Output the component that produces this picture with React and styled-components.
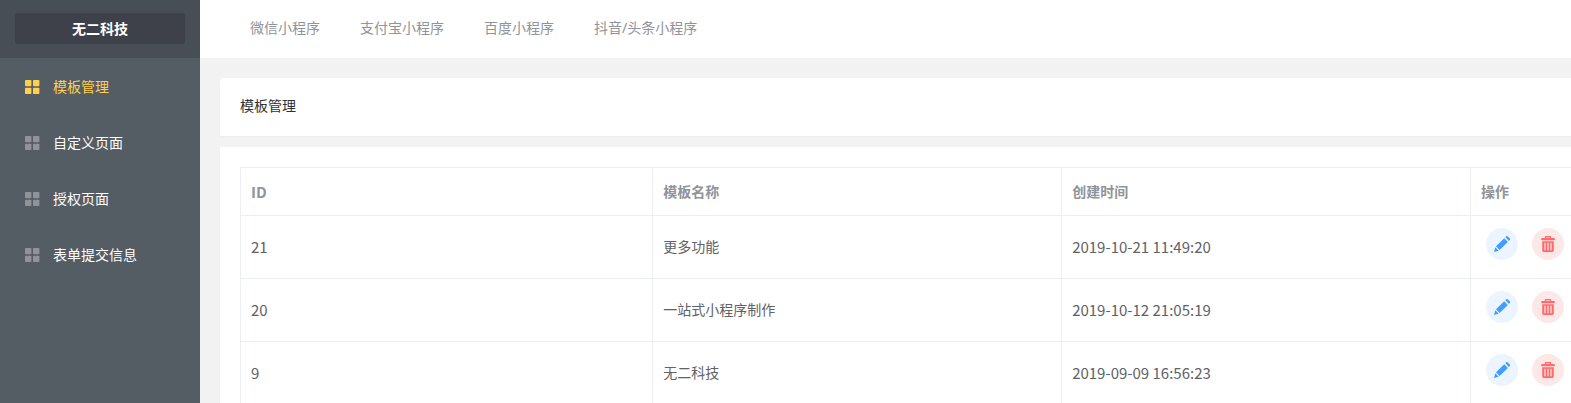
import React from 'react';
import styled, { createGlobalStyle } from 'styled-components';

const menus = ['模板管理', '自定义页面', '授权页面', '表单提交信息'];

const platforms = ['微信小程序', '支付宝小程序', '百度小程序', '抖音/头条小程序'];

const templates = [
    { id: 21, name: '更多功能', createdAt: '2019-10-21 11:49:20' },
    { id: 20, name: '一站式小程序制作', createdAt: '2019-10-12 21:05:19' },
    { id: 9, name: '无二科技', createdAt: '2019-09-09 16:56:23' }
];

function GridIcon() {
    return (
        <svg width="15" height="14" viewBox="0 0 15 14" fill="currentColor" aria-hidden="true">
            <rect x="0" y="0" width="6.4" height="6.2" rx="0.8" />
            <rect x="8" y="0" width="6.4" height="6.2" rx="0.8" />
            <rect x="0" y="7.8" width="6.4" height="6.2" rx="0.8" />
            <rect x="8" y="7.8" width="6.4" height="6.2" rx="0.8" />
        </svg>
    );
}

function PencilIcon() {
    return (
        <svg width="16" height="16" viewBox="0 0 16 16" fill="currentColor" aria-hidden="true">
            <path d="M11.3 1.1l.7-.7a1.3 1.3 0 0 1 1.8 0l1.9 1.9a1.3 1.3 0 0 1 0 1.8l-.8.8z" />
            <path d="M10.2 2.2l3.7 3.7-8.3 8.1-3.6-3.7z" />
            <path d="M1.3 11.3l3.4 3.4-4.7 1.3z" />
        </svg>
    );
}

function TrashIcon() {
    return (
        <svg width="16" height="16" viewBox="0 0 16 16" fill="currentColor" fillRule="evenodd" aria-hidden="true">
            <path d="M4.8 2V1.2C4.8.5 5.3 0 6 0h4c.7 0 1.2.5 1.2 1.2V2h2.9c.4 0 .7.3.7.7v1.1c0 .3-.3.5-.6.5H1.8c-.3 0-.6-.2-.6-.5V2.7c0-.4.3-.7.7-.7zm1.4 0h3.6v-.8H6.2z" />
            <path d="M2.2 5.3h11.6v9.2c0 .8-.6 1.4-1.4 1.4H3.6c-.8 0-1.4-.6-1.4-1.4zm2.2 1.5v7.4h1.2V6.8zm3 0v7.4h1.2V6.8zm3 0v7.4h1.2V6.8z" />
        </svg>
    );
}

export default function App() {
    return (
        <Layout>
            <GlobalStyle />
            <Sidebar>
                <Brand>
                    <BrandName>无二科技</BrandName>
                </Brand>
                <Menu>
                    {menus.map((menu, index) => (
                        <MenuItem key={menu} href="#" $active={index === 0}>
                            <GridIcon />
                            <span>{menu}</span>
                        </MenuItem>
                    ))}
                </Menu>
            </Sidebar>
            <Main>
                <TopNav>
                    {platforms.map(platform => (
                        <a key={platform} href="#">{platform}</a>
                    ))}
                </TopNav>
                <Content>
                    <TitleCard>
                        <h1>模板管理</h1>
                    </TitleCard>
                    <TableCard>
                        <Table>
                            <thead>
                                <tr>
                                    <th className="id latin">ID</th>
                                    <th>模板名称</th>
                                    <th>创建时间</th>
                                    <th className="actions">操作</th>
                                </tr>
                            </thead>
                            <tbody>
                                {templates.map(template => (
                                    <tr key={template.id}>
                                        <td className="latin">{template.id}</td>
                                        <td>{template.name}</td>
                                        <td className="latin">{template.createdAt}</td>
                                        <td>
                                            <Actions>
                                                <RoundButton type="button" aria-label="编辑">
                                                    <PencilIcon />
                                                </RoundButton>
                                                <RoundButton type="button" aria-label="删除" $danger>
                                                    <TrashIcon />
                                                </RoundButton>
                                            </Actions>
                                        </td>
                                    </tr>
                                ))}
                            </tbody>
                        </Table>
                    </TableCard>
                </Content>
            </Main>
        </Layout>
    )
}

const GlobalStyle = createGlobalStyle`
    * {
        box-sizing: border-box;
    }
    body {
        margin: 0;
        font-family: "Noto Sans", "Noto Sans CJK SC", sans-serif;
        font-size: 14px;
        line-height: 20px;
        color: #606266;
        background: #f2f2f2;
    }
    a {
        text-decoration: none;
    }
`

const Layout = styled.div`
    display: flex;
    height: 100vh;
    overflow: hidden;
`

const Sidebar = styled.aside`
    flex: 0 0 200px;
    background: #545c64;
`

const Brand = styled.div`
    height: 58px;
    padding: 13px 15px 14px;
    background: #484e56;
`

const BrandName = styled.div`
    height: 31px;
    line-height: 31px;
    border-radius: 3px;
    background: #3e4149;
    color: #fff;
    font-weight: 700;
    text-align: center;
`

const Menu = styled.nav`
    padding-top: 1px;
`

const MenuItem = styled.a`
    display: flex;
    align-items: center;
    gap: 13px;
    height: 56px;
    padding: 0 25px;
    color: ${props => (props.$active ? '#ffd04b' : '#fff')};
    svg {
        color: ${props => (props.$active ? '#ffd04b' : '#909399')};
    }
`

const Main = styled.main`
    flex: 1;
    min-width: 0;
`

const TopNav = styled.nav`
    display: flex;
    align-items: center;
    gap: 40px;
    height: 58px;
    padding: 0 50px 2px;
    background: #fff;
    a {
        color: #909399;
    }
`

const Content = styled.div`
    padding: 20px 0 0 20px;
`

const TitleCard = styled.div`
    padding: 18px 20px 20px;
    border-bottom: 1px solid #ebeef5;
    border-radius: 4px 0 0 0;
    background: #fff;
    h1 {
        margin: 0;
        font-size: 14px;
        line-height: 20px;
        font-weight: 400;
        color: #303133;
    }
`

const TableCard = styled.div`
    margin-top: 10px;
    padding: 20px 0 20px 20px;
    background: #fff;
`

const Table = styled.table`
    width: 100%;
    table-layout: fixed;
    border-spacing: 0;
    border-top: 1px solid #ebeef5;
    border-left: 1px solid #ebeef5;
    th,
    td {
        padding: 0 10px;
        border-bottom: 1px solid #ebeef5;
        border-right: 1px solid #ebeef5;
        text-align: left;
    }
    th {
        height: 48px;
        color: #909399;
        font-weight: 700;
    }
    td {
        height: 63px;
    }
    th:last-child,
    td:last-child {
        border-right: 0;
        padding-right: 0;
    }
    .latin {
        font-family: "Noto Sans CJK SC", sans-serif;
        font-size: 15px;
    }
    .id {
        width: 31%;
    }
    .actions {
        width: 100px;
    }
`

const Actions = styled.div`
    display: flex;
    gap: 14px;
    padding: 0 5px 6px;
`

const RoundButton = styled.button`
    display: flex;
    align-items: center;
    justify-content: center;
    width: 32px;
    height: 32px;
    padding: 0;
    border: 0;
    border-radius: 50%;
    cursor: pointer;
    color: ${props => (props.$danger ? '#ff6b6b' : '#409eff')};
    background: ${props => (props.$danger ? '#fde8e8' : '#ecf5ff')};
`
